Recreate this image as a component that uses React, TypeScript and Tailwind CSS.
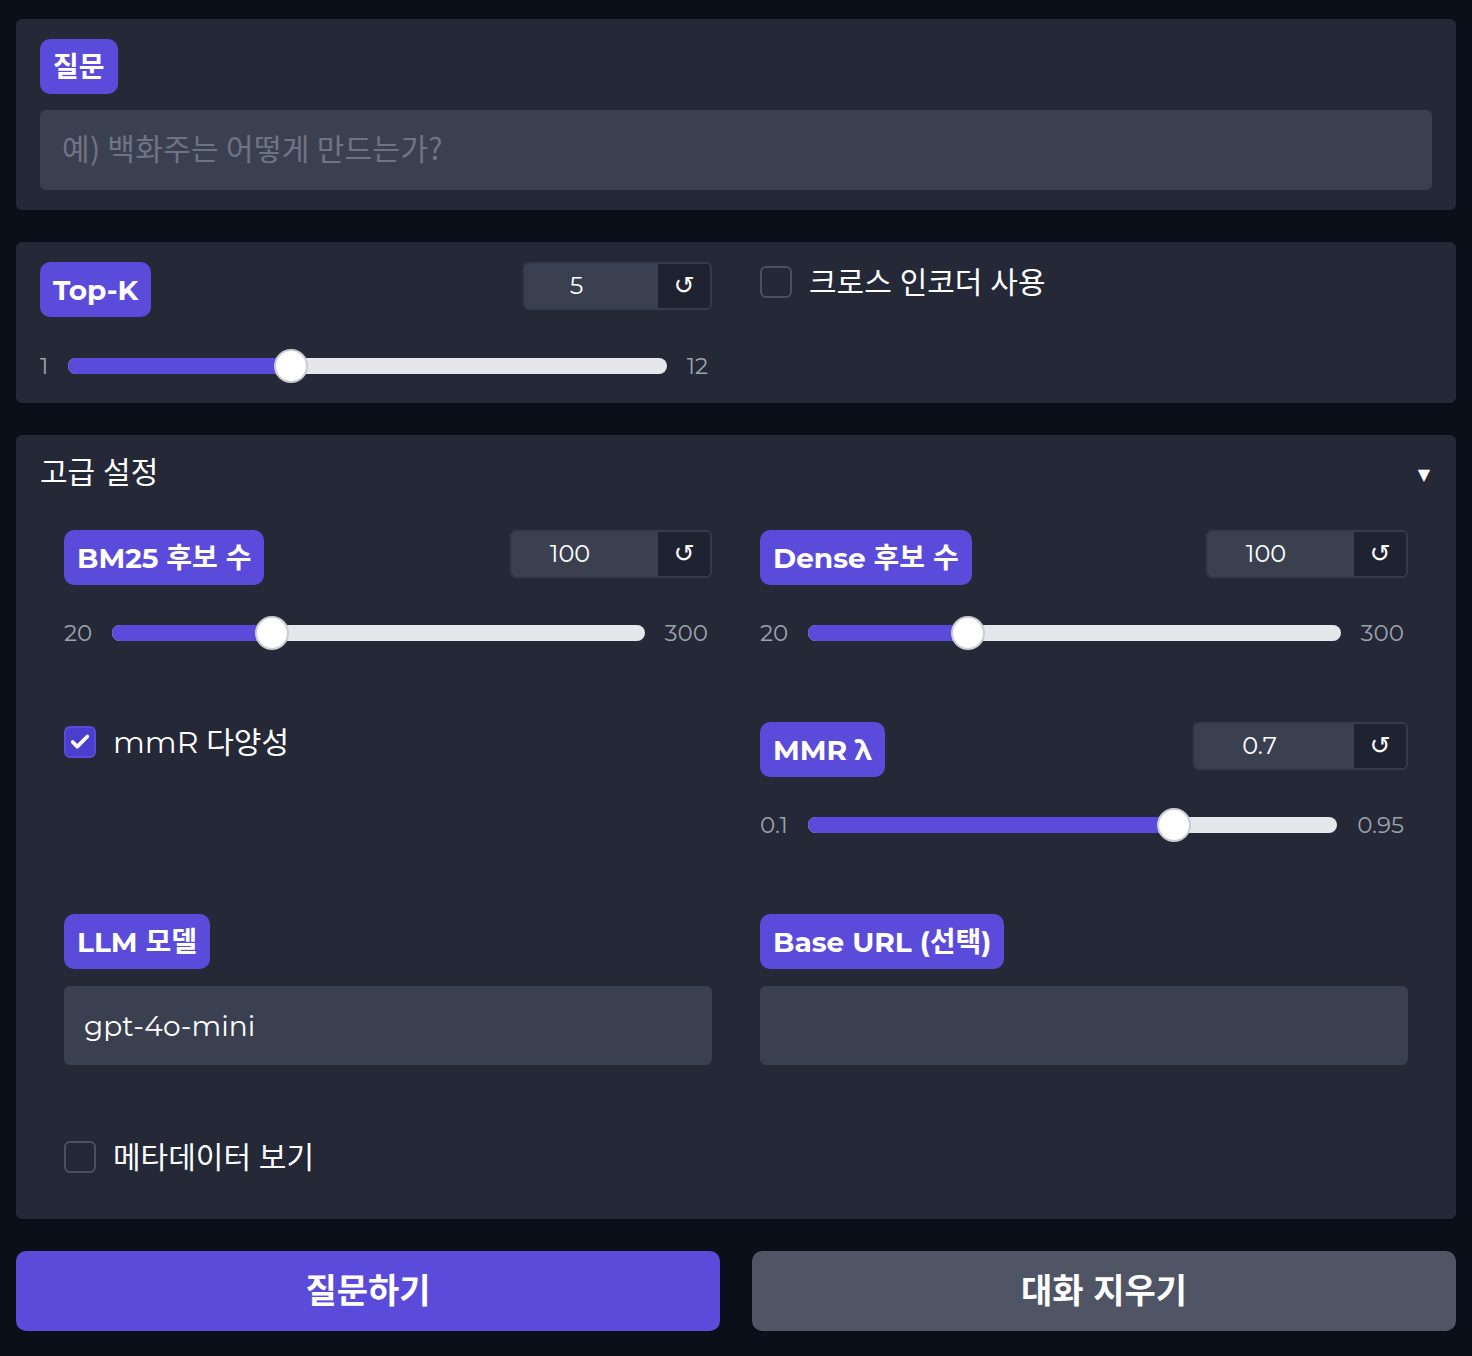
import { Check } from 'lucide-react';

const font = "font-['Montserrat','Open_Sans','Noto_Sans_CJK_KR',sans-serif]";

function Label({ children }: { children: React.ReactNode }) {
  return (
    <span className="inline-flex h-[55px] items-center rounded-[10px] bg-[#5b4bdb] px-[13px] text-[28px] font-bold text-white">
      {children}
    </span>
  );
}

function NumberBox({ value, width }: { value: string; width: string }) {
  return (
    <div className={`flex h-[48px] overflow-hidden rounded-[6px] border-2 border-[#363b4b] ${width}`}>
      <div className="flex flex-1 items-center justify-center bg-[#3b4051] pr-[30px] text-[24px] text-white">
        {value}
      </div>
      <div className="flex w-[52px] items-center justify-center bg-[#1f2331] font-['DejaVu_Sans',sans-serif] text-[25px] text-white">
        ↺
      </div>
    </div>
  );
}

function Slider({ min, max, frac }: { min: string; max: string; frac: number }) {
  return (
    <div className="flex h-[34px] items-center gap-[20px] pr-[4px] text-[23px] text-[#9ca3af]">
      <span>{min}</span>
      <div className="relative h-[34px] flex-1">
        <div className="absolute left-0 right-0 top-[9px] h-[16px] rounded-full bg-[#e5e7eb]" />
        <div
          className="absolute left-0 top-[9px] h-[16px] rounded-full bg-[#5b4bdb]"
          style={{ width: `calc(17px + (100% - 34px) * ${frac})` }}
        />
        <div
          className="absolute top-0 h-[34px] w-[34px] rounded-full border-2 border-[#c9ccd2] bg-white"
          style={{ left: `calc((100% - 34px) * ${frac})` }}
        />
      </div>
      <span>{max}</span>
    </div>
  );
}

function CheckRow({ checked, children }: { checked?: boolean; children: React.ReactNode }) {
  return (
    <div className="flex h-10 items-center gap-[17px] text-[30px] text-white">
      {checked ? (
        <span className="flex h-[32px] w-[32px] items-center justify-center rounded-[6px] border-2 border-[#5b4bdb] bg-[#4a3fcc]">
          <Check className="h-[22px] w-[22px] text-white" strokeWidth={4} />
        </span>
      ) : (
        <span className="h-[32px] w-[32px] rounded-[6px] border-2 border-[#4b5060]" />
      )}
      <span>{children}</span>
    </div>
  );
}

export default function App() {
  return (
    <div className={`min-h-[1356px] bg-[#0b0f19] px-4 pt-[19px] pb-6 ${font}`}>
      {/* 질문 */}
      <section className="rounded-[6px] bg-[#242837] px-6 pt-5 pb-5">
        <Label>질문</Label>
        <div className="mt-4 flex h-[80px] items-center rounded-[6px] bg-[#3b4051] px-[22px] pb-[5px] font-['Noto_Sans_CJK_KR',sans-serif] text-[30px] tracking-[0.3px] text-[#6f7484]">
          예) 백화주는 어떻게 만드는가?
        </div>
      </section>

      {/* Top-K */}
      <section className="mt-8 grid grid-cols-2 gap-x-12 rounded-[6px] bg-[#242837] px-6 pt-5 pb-5">
        <div>
          <div className="flex items-start justify-between">
            <Label>Top-K</Label>
            <NumberBox value="5" width="w-[189px]" />
          </div>
          <div className="mt-8">
            <Slider min="1" max="12" frac={4 / 11} />
          </div>
        </div>
        <div>
          <CheckRow>크로스 인코더 사용</CheckRow>
        </div>
      </section>

      {/* 고급 설정 */}
      <section className="mt-8 rounded-[6px] bg-[#242837] pt-[17px] pb-[42px]">
        <div className="flex h-10 items-center justify-between px-6 text-[30px] text-white">
          <span>고급 설정</span>
          <span className="pr-[2px] pt-[6px] font-['DejaVu_Sans',sans-serif] text-[16px]">▼</span>
        </div>
        <div className="grid grid-cols-2 gap-x-12 gap-y-[72px] px-12 pt-[38px]">
          <div>
            <div className="flex items-start justify-between">
              <Label>BM25 후보 수</Label>
              <NumberBox value="100" width="w-[202px]" />
            </div>
            <div className="mt-[31px]">
              <Slider min="20" max="300" frac={80 / 280} />
            </div>
          </div>
          <div>
            <div className="flex items-start justify-between">
              <Label>Dense 후보 수</Label>
              <NumberBox value="100" width="w-[202px]" />
            </div>
            <div className="mt-[31px]">
              <Slider min="20" max="300" frac={80 / 280} />
            </div>
          </div>

          <div>
            <CheckRow checked>mmR 다양성</CheckRow>
          </div>
          <div>
            <div className="flex items-start justify-between">
              <Label>MMR λ</Label>
              <NumberBox value="0.7" width="w-[215px]" />
            </div>
            <div className="mt-[31px]">
              <Slider min="0.1" max="0.95" frac={0.6 / 0.85} />
            </div>
          </div>

          <div>
            <Label>LLM 모델</Label>
            <div className="mt-[17px] flex h-[79px] items-center rounded-[6px] bg-[#3b4051] px-5 text-[28px] text-white">
              gpt-4o-mini
            </div>
          </div>
          <div>
            <Label>Base URL (선택)</Label>
            <div className="mt-[17px] h-[79px] rounded-[6px] bg-[#3b4051]" />
          </div>

          <div className="col-span-2">
            <CheckRow>메타데이터 보기</CheckRow>
          </div>
        </div>
      </section>

      {/* buttons */}
      <div className="mt-8 grid grid-cols-2 gap-8">
        <button className="h-[80px] rounded-[10px] bg-[#5b4bdb] text-[34px] font-bold text-white">질문하기</button>
        <button className="h-[80px] rounded-[10px] bg-[#4f5565] text-[34px] font-bold text-white">대화 지우기</button>
      </div>
    </div>
  );
}
